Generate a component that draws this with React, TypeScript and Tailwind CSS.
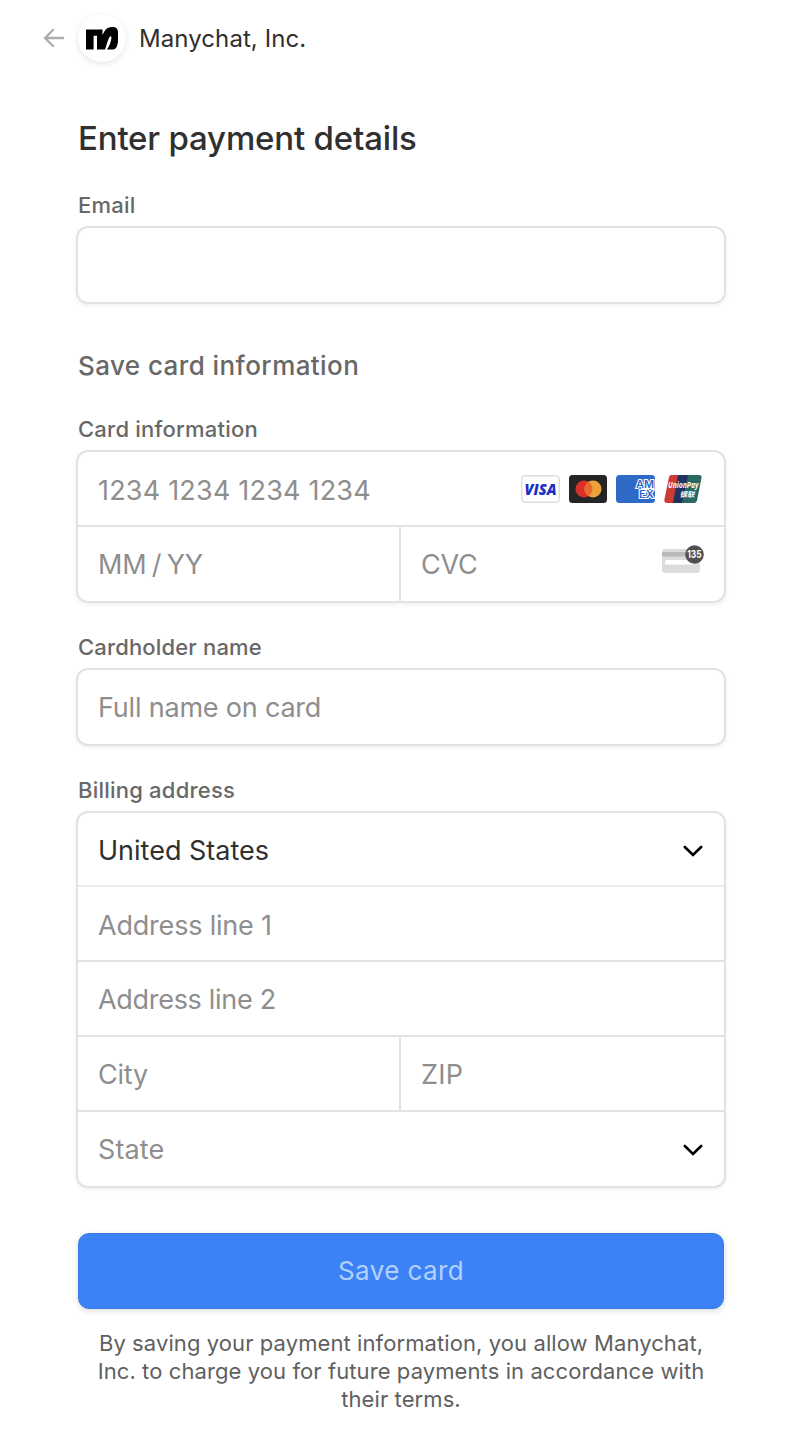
import { useState } from 'react';
import type { ReactNode } from 'react';

function Label({ children, className = 'tracking-[0.22px]' }: { children: ReactNode; className?: string }) {
  return <div className={`h-7 pl-0.5 text-[22px] leading-7 font-medium text-[#686868] ${className}`}>{children}</div>;
}

function Group({ className = '', children }: { className?: string; children: ReactNode }) {
  return (
    <div className={`w-[650px] overflow-hidden rounded-xl border-2 border-[#e2e2e2] bg-white shadow-[0_2px_4px_rgba(0,0,0,0.06)] ${className}`}>
      {children}
    </div>
  );
}

interface FieldProps {
  name: string;
  placeholder?: string;
  className?: string;
}

function Field({ name, placeholder = '', className = 'pt-0.5 tracking-[-0.2px]' }: FieldProps) {
  return (
    <input
      name={name}
      aria-label={name}
      placeholder={placeholder}
      className={`h-full w-full min-w-0 flex-1 bg-transparent pl-5 text-[27px] text-[#303030] outline-none placeholder:text-[#8e8e8e] ${className}`}
    />
  );
}

function Chevron() {
  return (
    <svg width="22" height="14" viewBox="0 0 22 14" fill="none" className="mr-5 shrink-0">
      <path d="M2.800 3L11 11L19.200 3" stroke="#000" strokeWidth="2.600" strokeLinecap="round" strokeLinejoin="miter" />
    </svg>
  );
}

function ManychatLogo() {
  return (
    <div className="ml-[13px] flex h-12 w-12 items-center justify-center rounded-full bg-white shadow-[0_2px_6px_rgba(0,0,0,0.1)]">
      <svg width="34" height="24" viewBox="0 0 34 24">
        <path d="M1 3.500H17.500V9L19.500 5.300C21.100 2.200 23.800 1 27.400 1C31 1 33 2.700 33 6.400V14C33 18.500 31.500 23.500 28 23.500H21.800C24.500 20.500 26.400 14.500 26.400 11.600C26.400 10 25.400 9.600 24.500 11C22.300 14.500 21.600 20.100 20 23.500H12V9.800H8.600V23.500H1Z" />
      </svg>
    </div>
  );
}

function CardBrands() {
  return (
    <div className="mr-[22px] flex shrink-0 gap-[9px]">
      <svg width="39" height="28" viewBox="0 0 39 28">
        <rect x="0.75" y="0.75" width="37.500" height="26.500" rx="3.500" fill="#fff" stroke="#dedede" strokeWidth="1.500" />
        <text x="3.500" y="19.500" textLength="32" lengthAdjust="spacingAndGlyphs" fontFamily="Open Sans" fontSize="15" fontWeight="800" fontStyle="italic" fill="#1a2fc4">
          VISA
        </text>
      </svg>
      <svg width="38" height="28" viewBox="0 0 38 28">
        <rect width="38" height="28" rx="3.500" fill="#252525" />
        <circle cx="15" cy="14" r="8.500" fill="#da2f28" />
        <circle cx="24" cy="14" r="8.500" fill="#eda23d" />
        <path d="M19.500 6.790a8.500 8.500 0 0 1 0 14.420a8.500 8.500 0 0 1 0-14.420z" fill="#e9692c" />
      </svg>
      <svg width="39" height="28" viewBox="0 0 39 28" className="overflow-visible">
        <rect width="39" height="28" rx="3.500" fill="#2f6ac8" />
        <g fill="#2f6ac8" stroke="#fff" strokeWidth="2" paintOrder="stroke" fontFamily="Inter" fontWeight="600" fontSize="10">
          <text x="20" y="13" textLength="18" lengthAdjust="spacingAndGlyphs">AM</text>
          <text x="23" y="22.700" textLength="15" lengthAdjust="spacingAndGlyphs">EX</text>
        </g>
      </svg>
      <svg width="38" height="28" viewBox="0 0 38 28" className="overflow-visible">
        <path d="M7.500 0H18L12 28H3C1 28 0 26.500 .4 24.500L5 2Q5.500 0 7.500 0Z" fill="#ce3a34" />
        <path d="M14 0H26L20 28H9Z" fill="#20325f" />
        <path d="M24 0H35Q38 0 37.500 3L33 25.500Q32.500 28 30 28H18Z" fill="#2b6862" />
        <g fill="#fff" fontStyle="italic" fontWeight="700">
          <text x="4" y="13" textLength="30.500" lengthAdjust="spacingAndGlyphs" fontFamily="Open Sans" fontSize="8.500">UnionPay</text>
          <text x="15.500" y="22" textLength="15" lengthAdjust="spacingAndGlyphs" fontFamily="Noto Sans CJK SC" fontSize="7">银联</text>
        </g>
      </svg>
    </div>
  );
}

function CvcIcon() {
  return (
    <svg width="42" height="28" viewBox="0 0 42 28" className="mr-5 mb-2.5 shrink-0 overflow-visible">
      <rect x="0" y="4" width="38" height="24" rx="3" fill="#dcdcdc" />
      <rect x="0" y="7" width="38" height="4.500" fill="#b8b8b8" />
      <rect x="3" y="15" width="30" height="4.500" rx="1.500" fill="#fff" />
      <circle cx="32.500" cy="9.500" r="9.300" fill="#4f4f4f" />
      <text x="25.200" y="13.400" textLength="14.500" lengthAdjust="spacingAndGlyphs" fontFamily="Inter" fontSize="10.500" fontWeight="700" fill="#fff">
        135
      </text>
    </svg>
  );
}

export default function App() {
  const [saving, setSaving] = useState(false);

  return (
    <div className="min-h-[1450px] w-[812px] bg-white font-['Inter',sans-serif]">
      <header className="flex h-[76px] items-center pl-[43px]">
        <svg width="22" height="20" viewBox="0 0 22 20" fill="none" stroke="#adadad" strokeWidth="2.400" strokeLinecap="round" strokeLinejoin="round">
          <path d="M20 10H3M10 2L2 10L10 18" />
        </svg>
        <ManychatLogo />
        <span className="ml-[13px] pt-0.5 text-[24px] tracking-[0.08px] text-[#303030]">Manychat, Inc.</span>
      </header>

      <form className="flex flex-col pl-[76px]" onSubmit={(e) => e.preventDefault()}>
        <h1 className="mt-[40px] h-11 pl-0.5 text-[33px] leading-[44px] font-medium tracking-[-0.18px] text-[#303030]">Enter payment details</h1>

        <div className="mt-[31px]">
          <Label>Email</Label>
          <Group className="mt-[7px] h-[78px]">
            <Field name="email" />
          </Group>
        </div>

        <h2 className="mt-[44px] h-9 pl-0.5 text-[26px] leading-9 font-medium tracking-[0.42px] text-[#686868]">Save card information</h2>

        <div className="mt-[31px]">
          <Label>Card information</Label>
          <Group className="mt-[7px] h-[153px]">
            <div className="flex h-[75px] items-center border-b-2 border-[#e2e2e2]">
              <Field name="cardNumber" placeholder="1234 1234 1234 1234" className="pt-1 tracking-[0.2px]" />
              <CardBrands />
            </div>
            <div className="flex h-[74px]">
              <div className="flex w-[323px] border-r-2 border-[#e2e2e2]">
                <Field name="cardExpiry" placeholder="MM / YY" className="tracking-[-0.2px] [word-spacing:-2px]" />
              </div>
              <div className="flex flex-1 items-center">
                <Field name="cardCvc" placeholder="CVC" className="tracking-[-0.2px]" />
                <CvcIcon />
              </div>
            </div>
          </Group>
        </div>

        <div className="mt-[30px]">
          <Label className="tracking-[0.16px]">Cardholder name</Label>
          <Group className="mt-[7px] h-[78px]">
            <Field name="billingName" placeholder="Full name on card" className="tracking-[-0.2px]" />
          </Group>
        </div>

        <div className="mt-[30px]">
          <Label>Billing address</Label>
          <Group className="mt-[7px] h-[377px]">
            <div className="flex h-[74px] items-center justify-between border-b-2 border-[#ececec] pt-1">
              <span className="pl-5 text-[27px] text-[#303030]">United States</span>
              <Chevron />
            </div>
            <div className="flex h-[75px] border-b-2 border-[#e2e2e2]">
              <Field name="addressLine1" placeholder="Address line 1" className="pt-1 tracking-[-0.2px]" />
            </div>
            <div className="flex h-[75px] border-b-2 border-[#e2e2e2]">
              <Field name="addressLine2" placeholder="Address line 2" className="pt-0.5 tracking-[-0.3px]" />
            </div>
            <div className="flex h-[75px] border-b-2 border-[#e2e2e2]">
              <div className="flex w-[323px] border-r-2 border-[#e2e2e2]">
                <Field name="city" placeholder="City" />
              </div>
              <Field name="zip" placeholder="ZIP" className="pt-0.5 tracking-[0.3px]" />
            </div>
            <div className="flex h-[74px] items-center justify-between pt-0.5">
              <span className="pl-5 text-[27px] tracking-[0.1px] text-[#8e8e8e]">State</span>
              <Chevron />
            </div>
          </Group>
        </div>

        <button
          type="submit"
          disabled={saving}
          onClick={() => setSaving(false)}
          className="mt-[45px] ml-0.5 h-[76px] w-[646px] rounded-[11px] border border-[#377be8] bg-[#3b82f7] pb-0.5 text-[26px] tracking-[0.4px] text-[#b3d0fb] shadow-[0_2px_6px_rgba(0,0,0,0.14)]"
        >
          Save card
        </button>

        <p className="mt-5 w-[650px] text-center text-[22px] leading-7 tracking-[0.09px] text-[#5f5f5f]">
          By saving your payment information, you allow Manychat,
          <br />
          Inc. to charge you for future payments in accordance with
          <br />
          their terms.
        </p>
      </form>
    </div>
  );
}
